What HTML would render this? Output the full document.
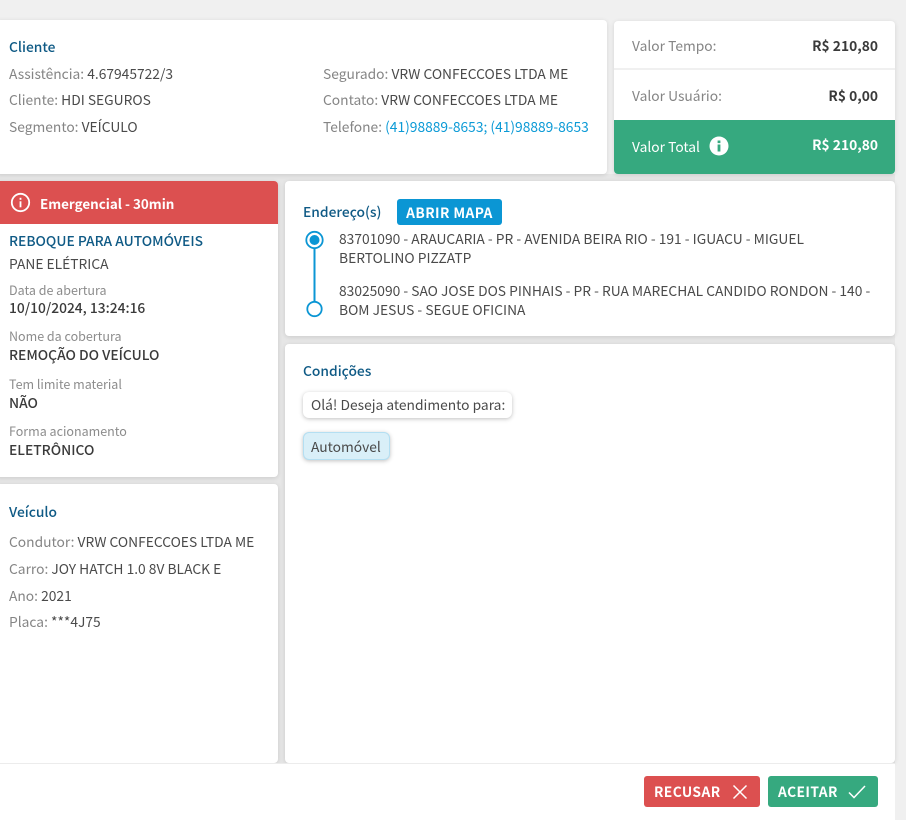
<!DOCTYPE html>
<html lang="pt-BR"><head><meta charset="utf-8"><title>Serviço</title>
<style>
html,body{margin:0;padding:0;width:906px;height:820px;overflow:hidden;background:#f0f0f0;}
body{position:relative;font-family:"Noto Sans CJK JP","Liberation Sans",sans-serif;font-size:13.8px;color:#4a4a4a;}
.card{position:absolute;background:#fff;border-radius:4px;box-shadow:0 1px 5px rgba(0,0,0,.12);}
.t{position:absolute;white-space:nowrap;line-height:20px;height:20px;margin-top:-1px;}
.g{color:#858585}
.h{color:#0f5a85;font-weight:500}
.b{font-weight:500;color:#3a3a3a}
.t.s{font-size:12.5px;color:#8c8c8c;margin-top:0;}
.l{color:#0b9ad6}
</style></head><body>
<div style="position:absolute;left:0;top:174px;width:895px;height:600px;background:#e6e6e6;"></div>

<div class="card" style="left:-5px;top:20px;width:612px;height:154px;"></div>
<div class="t h" style="left:9px;top:37px;">Cliente</div>
<div class="t" style="left:9px;top:64px;"><span class="g">Assistência:</span> 4.67945722/3</div>
<div class="t" style="left:9px;top:90px;"><span class="g">Cliente:</span> HDI SEGUROS</div>
<div class="t" style="left:9px;top:117px;"><span class="g">Segmento:</span> VEÍCULO</div>
<div class="t" style="left:323px;top:64px;"><span class="g">Segurado:</span> VRW CONFECCOES LTDA ME</div>
<div class="t" style="left:323px;top:90px;"><span class="g">Contato:</span> VRW CONFECCOES LTDA ME</div>
<div class="t" style="left:323px;top:117px;"><span class="g">Telefone:</span> <span class="l">(41)98889-8653; (41)98889-8653</span></div>

<div class="card" style="left:614px;top:21px;width:281px;height:153px;overflow:hidden;">
  <div style="position:absolute;left:0;top:47px;width:281px;height:2px;background:#f0f0f0;"></div>
  <div style="position:absolute;left:0;top:99px;width:281px;height:54px;background:#36a97f;"></div>
</div>
<div class="t g" style="left:632px;top:36px;">Valor Tempo:</div>
<div class="t b" style="right:28px;top:36px;font-weight:700;">R$ 210,80</div>
<div class="t g" style="left:632px;top:86px;">Valor Usuário:</div>
<div class="t b" style="right:28px;top:86px;font-weight:700;">R$ 0,00</div>
<div class="t" style="left:632px;top:137px;color:#fff;">Valor Total</div>
<svg style="position:absolute;left:709px;top:136px" width="20" height="20" viewBox="0 0 20 20"><circle cx="10" cy="10" r="9.5" fill="#fff"/><rect x="8.6" y="8.5" width="2.8" height="7" fill="#36a97f"/><rect x="8.6" y="4.5" width="2.8" height="2.6" fill="#36a97f"/></svg>
<div class="t" style="right:28px;top:135px;color:#fff;font-weight:700;">R$ 210,80</div>

<div class="card" style="left:-5px;top:181px;width:283px;height:296px;overflow:hidden;">
  <div style="position:absolute;left:0;top:0;width:283px;height:43px;background:#dc5050;"></div>
</div>
<svg style="position:absolute;left:10px;top:192px" width="21" height="21" viewBox="0 0 21 21" fill="none"><circle cx="10.5" cy="10.5" r="8.7" stroke="#fff" stroke-width="1.8"/><rect x="9.6" y="9.3" width="1.8" height="6" fill="#fff"/><rect x="9.6" y="5.8" width="1.8" height="2" fill="#fff"/></svg>
<div class="t" style="left:40px;top:193px;margin-top:0;color:#fff;font-weight:700;font-size:13.4px;">Emergencial - 30min</div>
<div class="t h" style="left:9px;top:231px;">REBOQUE PARA AUTOMÓVEIS</div>
<div class="t" style="left:9px;top:254px;">PANE ELÉTRICA</div>
<div class="t s" style="left:9px;top:280px;">Data de abertura</div>
<div class="t b" style="left:9px;top:298px;">10/10/2024, 13:24:16</div>
<div class="t s" style="left:9px;top:326px;">Nome da cobertura</div>
<div class="t b" style="left:9px;top:345px;">REMOÇÃO DO VEÍCULO</div>
<div class="t s" style="left:9px;top:374px;">Tem limite material</div>
<div class="t b" style="left:9px;top:393px;">NÃO</div>
<div class="t s" style="left:9px;top:421px;">Forma acionamento</div>
<div class="t b" style="left:9px;top:440px;">ELETRÔNICO</div>

<div class="card" style="left:-5px;top:484px;width:283px;height:279px;"></div>
<div class="t h" style="left:9px;top:502px;">Veículo</div>
<div class="t" style="left:9px;top:532px;"><span class="g">Condutor:</span> VRW CONFECCOES LTDA ME</div>
<div class="t" style="left:9px;top:559px;"><span class="g">Carro:</span> JOY HATCH 1.0 8V BLACK E</div>
<div class="t" style="left:9px;top:586px;"><span class="g">Ano:</span> 2021</div>
<div class="t" style="left:9px;top:612px;"><span class="g">Placa:</span> ***4J75</div>

<div class="card" style="left:285px;top:181px;width:610px;height:155px;"></div>
<div class="t h" style="left:303px;top:202px;">Endereço(s)</div>
<div style="position:absolute;left:397px;top:199px;width:105px;height:26px;background:#0b96d4;border-radius:3px;color:#fff;font-weight:700;text-align:center;line-height:26px;letter-spacing:.4px;">ABRIR MAPA</div>
<svg style="position:absolute;left:303px;top:228px" width="24" height="92" viewBox="0 0 24 92" fill="none">
<circle cx="11.5" cy="12" r="8.2" stroke="#0b96d4" stroke-width="1.8"/><circle cx="11.5" cy="12" r="5" fill="#0b96d4"/>
<rect x="10.5" y="20" width="2" height="53" fill="#0b96d4"/>
<circle cx="11.5" cy="81" r="7.2" stroke="#0b96d4" stroke-width="1.8"/></svg>
<div class="t" style="left:339px;top:229px;">83701090 - ARAUCARIA - PR - AVENIDA BEIRA RIO - 191 - IGUACU - MIGUEL</div>
<div class="t" style="left:339px;top:248px;">BERTOLINO PIZZATP</div>
<div class="t" style="left:339px;top:281px;">83025090 - SAO JOSE DOS PINHAIS - PR - RUA MARECHAL CANDIDO RONDON - 140 -</div>
<div class="t" style="left:339px;top:300px;">BOM JESUS - SEGUE OFICINA</div>

<div class="card" style="left:285px;top:344px;width:610px;height:419px;"></div>
<div class="t h" style="left:303px;top:361px;">Condições</div>
<div style="position:absolute;left:303px;top:392px;width:209px;height:26px;background:#fff;border-radius:6px;box-shadow:0 1px 4px rgba(0,0,0,.25);"></div>
<div class="t" style="left:311px;top:395px;">Olá! Deseja atendimento para:</div>
<div style="position:absolute;left:303px;top:432px;width:85px;height:26px;background:#d9eff8;border:1px solid #b4dff2;border-radius:6px;box-shadow:0 1px 4px rgba(0,0,0,.25);"></div>
<div class="t" style="left:311px;top:437px;">Automóvel</div>

<div style="position:absolute;left:0;top:763px;width:895px;height:57px;background:#fff;border-top:1px solid #ececec;box-sizing:border-box;"></div>
<div style="position:absolute;left:644px;top:776px;width:116px;height:31px;background:#dc5050;border-radius:3px;"></div>
<div class="t" style="left:654px;top:782px;color:#fff;font-weight:700;letter-spacing:.4px;">RECUSAR</div>
<svg style="position:absolute;left:732px;top:784px" width="16" height="16" viewBox="0 0 16 16" fill="none" stroke="#fff" stroke-width="1.5"><path d="M1.5 1.5 14.5 14.5M14.5 1.5 1.5 14.5"/></svg>
<div style="position:absolute;left:768px;top:776px;width:110px;height:31px;background:#36a97f;border-radius:3px;"></div>
<div class="t" style="left:778px;top:782px;color:#fff;font-weight:700;letter-spacing:.4px;">ACEITAR</div>
<svg style="position:absolute;left:848px;top:784px" width="18" height="16" viewBox="0 0 18 16" fill="none" stroke="#fff" stroke-width="1.5"><path d="M1 8.5 6 13.5 17 2"/></svg>
</body></html>
